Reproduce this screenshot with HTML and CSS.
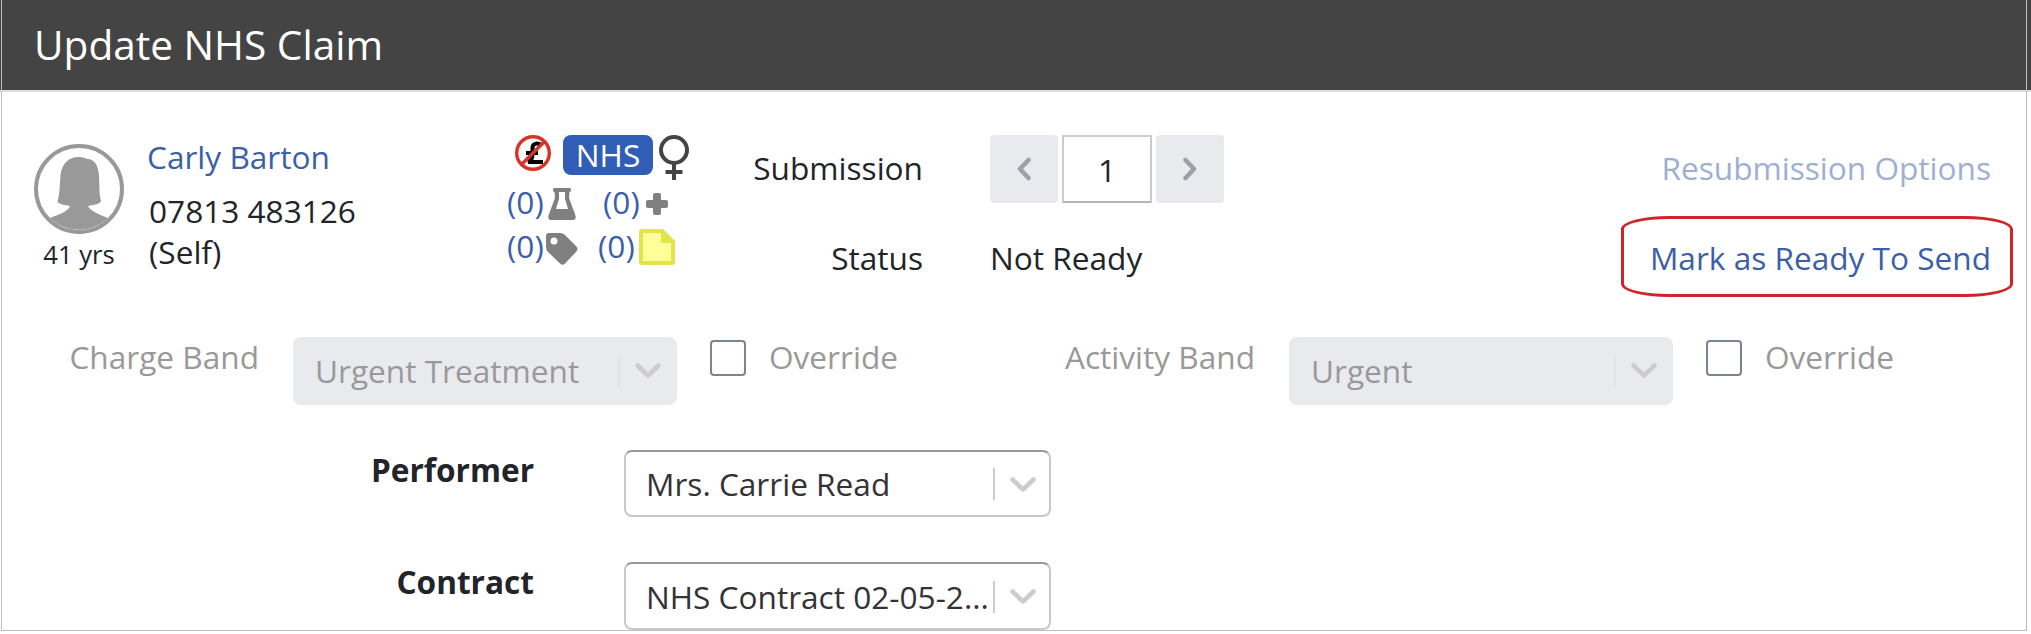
FILE: index.html
```
<!DOCTYPE html>
<html lang="en">
<head>
    <meta charset="UTF-8">
    <meta name="viewport" content="width=device-width, initial-scale=1.0">
    <title>Update NHS Claim</title>
    <link rel="stylesheet" href="styles.css">
</head>
<body>
    <header class="header">
        <h1>Update NHS Claim</h1>
    </header>

    <main class="panel">
        <section class="summary">
            <div class="avatar">
                <svg width="90" height="90" viewBox="0 0 90 90">
                    <circle cx="45" cy="45" r="43" fill="#fff" stroke="#999" stroke-width="4"/>
                    <path fill="#999" d="M45 13C49 13 51 14 53 15C62 15 64 23 65 31L65.500 47Q65.500 52 67 57C66 60 60 61 54 62C55 66 66 71 74 74A41.500 41.500 0 0 1 16 74C24 71 35 67 36 62C30 61 25 60 23.500 58Q25 52 25.500 46L26.500 31C28 20 34 13 45 13Z"/>
                </svg>
                <span class="age">41 yrs</span>
            </div>

            <div class="patient">
                <a class="patient-name">Carly Barton</a>
                <span class="patient-phone">07813 483126</span>
                <span>(Self)</span>
            </div>

            <div class="flags">
                <div class="flag-row flag-top">
                    <svg class="no-charge" width="36" height="36" viewBox="0 0 36 36">
                        <path d="M26 11C24 7.500 17.500 7.500 17.500 13V19C17.500 23 16 26 13 27H28M11 18H23" fill="none" stroke="#000" stroke-width="4"/>
                        <circle cx="18" cy="18" r="16.300" fill="none" stroke="#da3128" stroke-width="3.400"/>
                        <path d="M6.500 29.500L29.500 6.500" stroke="#da3128" stroke-width="3.400"/>
                    </svg>
                    <span class="badge">NHS</span>
                    <svg class="female" width="30" height="46" viewBox="0 0 30 46">
                        <g fill="none" stroke="#444" stroke-width="4">
                            <circle cx="15" cy="15" r="13"/>
                            <path d="M15 28V45M6.500 37H23.500"/>
                        </g>
                    </svg>
                </div>
                <div class="flag-row">
                    <a class="count">(0)<svg class="flask" width="28" height="32" viewBox="0 0 28 32"><path fill="#808080" fill-rule="evenodd" d="M6 0H22Q23 0 23 2T21.500 4L21 10L27 26Q29 32 25 32H3Q-1 32 1 26L7 10L6.500 4Q5 4 5 2T6 0ZM11 4V11L8 21H20L17 11V4Z"/></svg></a>
                    <a class="count">(0)<svg class="plus" width="24" height="24" viewBox="0 0 24 24"><path fill="#808080" d="M10 1H14Q16 1 16 3V8H21Q23 8 23 10V14Q23 16 21 16H16V21Q16 23 14 23H10Q8 23 8 21V16H3Q1 16 1 14V10Q1 8 3 8H8V3Q8 1 10 1Z"/></svg></a>
                </div>
                <div class="flag-row flag-bottom">
                    <a class="count">(0)<svg class="tag" width="32" height="32" viewBox="0 0 32 32"><path fill="#808080" fill-rule="evenodd" d="M3 0H14Q17 0 19 2L30 13Q33 16 30 19L19 30.500Q16.500 33 14 30.500L2 19Q0 17 0 14V3Q0 0 3 0ZM8 4.500A3.500 3.500 0 1 0 8 11.500A3.500 3.500 0 1 0 8 4.500Z"/></svg></a>
                    <a class="count">(0)<svg class="note" width="36" height="36" viewBox="0 0 36 36"><path fill="#e3e34a" d="M3 0H24L36 12V33Q36 36 33 36H3Q0 36 0 33V3Q0 0 3 0Z"/><path fill="#ffff99" d="M4 4H22V14H32V32H4Z"/></svg></a>
                </div>
            </div>

            <div class="submission">
                <span class="label">Submission</span>
                <div class="pager">
                    <button class="pager-btn" aria-label="Previous">
                        <svg width="14" height="24" viewBox="0 0 14 24"><path d="M11.500 3L3 12L11.500 21"/></svg>
                    </button>
                    <div class="pager-value">1</div>
                    <button class="pager-btn" aria-label="Next">
                        <svg width="14" height="24" viewBox="0 0 14 24"><path d="M2.500 3L11 12L2.500 21"/></svg>
                    </button>
                </div>
                <span class="label">Status</span>
                <span>Not Ready</span>
            </div>

            <div class="actions">
                <a class="action disabled">Resubmission Options</a>
                <a class="action highlighted">Mark as Ready To Send</a>
            </div>
        </section>

        <section class="bands">
            <div class="band">
                <span class="band-label">Charge Band</span>
                <div class="select select-disabled">
                    <span class="select-value">Urgent Treatment</span>
                    <span class="separator"></span>
                    <svg class="chevron" width="26" height="16" viewBox="0 0 26 16"><path d="M2.500 2.500L13 12.500L23.500 2.500"/></svg>
                </div>
                <span class="checkbox"></span>
                <span>Override</span>
            </div>
            <div class="band">
                <span class="band-label">Activity Band</span>
                <div class="select select-disabled">
                    <span class="select-value">Urgent</span>
                    <span class="separator"></span>
                    <svg class="chevron" width="26" height="16" viewBox="0 0 26 16"><path d="M2.500 2.500L13 12.500L23.500 2.500"/></svg>
                </div>
                <span class="checkbox"></span>
                <span>Override</span>
            </div>
        </section>

        <section class="fields">
            <div class="field">
                <span class="field-label">Performer</span>
                <div class="select">
                    <span class="select-value">Mrs. Carrie Read</span>
                    <span class="separator"></span>
                    <svg class="chevron" width="26" height="16" viewBox="0 0 26 16"><path d="M2.500 2.500L13 12.500L23.500 2.500"/></svg>
                </div>
            </div>
            <div class="field">
                <span class="field-label">Contract</span>
                <div class="select">
                    <span class="select-value">NHS Contract 02-05-2...</span>
                    <span class="separator"></span>
                    <svg class="chevron" width="26" height="16" viewBox="0 0 26 16"><path d="M2.500 2.500L13 12.500L23.500 2.500"/></svg>
                </div>
            </div>
        </section>
    </main>
</body>
</html>
```

FILE: styles.css
```
*,
*::after {
    margin: 0;
    padding: 0;
    box-sizing: border-box;
}

body {
    font-family: 'Open Sans', sans-serif;
    font-size: 31.6px;
    line-height: 44px;
    color: #212529;
    background: #fff;
    overflow: hidden;
}

svg {
    display: block;
    flex: none;
}

a {
    color: #3c5fa8;
}

.header {
    position: relative;
    height: 92px;
    padding: 18px 0 0 34px;
    background: #444;
    border-bottom: 2px solid #dfdde0;
}

/* panel side lines continue over the header */
.header::after {
    content: '';
    position: absolute;
    top: 0;
    left: 1px;
    width: 2026px;
    height: 92px;
    border: 1px solid #c0c0c0;
    border-width: 0 1px;
}

.header h1 {
    font-size: 40.6px;
    font-weight: 400;
    line-height: 54px;
    color: #fff;
}

.panel {
    width: 2026px;
    height: 539px;
    margin-left: 1px;
    border: 1px solid #c0c0c0;
    border-top: none;
}

/* patient summary */
.summary {
    display: grid;
    grid-template-columns: 90px 337px 217px 530px 1fr;
    column-gap: 23px;
    height: 243px;
    padding: 43px 35px 0 32px;
}

.avatar {
    display: flex;
    flex-direction: column;
    align-items: center;
    padding-top: 9px;
}

.age {
    margin-top: 3px;
    font-size: 25.6px;
    line-height: 36px;
    white-space: nowrap;
}

.patient {
    display: flex;
    flex-direction: column;
    line-height: 41px;
    padding-left: 2px;
}

.patient-name {
    margin: 1px 0 13px -2px;
}

.flag-row {
    display: flex;
    height: 44px;
}

.flag-top {
    align-items: flex-start;
    padding-left: 8px;
}

.badge {
    width: 90px;
    height: 40px;
    margin: 0 6px 0 12px;
    border-radius: 8px;
    line-height: 40px;
    text-align: center;
    color: #fff;
    background: #305db5;
}

.count {
    display: flex;
    width: 96px;
    line-height: 45px;
}

.flask {
    margin: 9px 0 0 4px;
}

.plus {
    margin: 13px 0 0 5px;
}

.flag-bottom .count {
    line-height: 46px;
}

.flag-bottom .count:first-child {
    width: 91px;
}

.tag {
    margin: 10px 0 0 2px;
}

.note {
    margin: 6px 0 0 4px;
}

.submission {
    display: grid;
    grid-template-columns: 176px 1fr;
    grid-template-rows: 68px 44px;
    column-gap: 67px;
    row-gap: 33px;
}

.label {
    text-align: right;
}

.submission > .label:first-child {
    padding-top: 11px;
}

.pager {
    display: flex;
    gap: 4px;
}

.pager-btn {
    display: flex;
    align-items: center;
    justify-content: center;
    width: 68px;
    height: 68px;
    border: none;
    border-radius: 4px;
    background: #e9eaee;
}

.pager-btn path {
    fill: none;
    stroke: #9da0aa;
    stroke-width: 4.5;
    stroke-linecap: round;
    stroke-linejoin: round;
}

.pager-value {
    width: 90px;
    height: 68px;
    border: 2px solid #ccc;
    border-bottom-color: #b5b5b5;
    line-height: 66px;
    text-align: center;
}

.actions {
    display: flex;
    flex-direction: column;
    align-items: flex-end;
    gap: 46px;
    padding-top: 11px;
}

.action {
    position: relative;
    white-space: nowrap;
}

.disabled {
    color: #9eafd4;
}

.highlighted::after {
    content: '';
    position: absolute;
    top: -20px;
    right: -22px;
    width: 392px;
    height: 81px;
    border: 3px solid #d2232a;
    border-radius: 48px / 13px;
}

/* charge and activity bands */
.bands {
    display: flex;
    height: 115px;
    padding-top: 2px;
    color: #999;
}

.band {
    display: flex;
    align-items: flex-start;
    width: 996px;
}

.band > span {
    margin-top: -2px;
}

.band-label {
    width: 257px;
    text-align: right;
}

.select {
    display: flex;
    align-items: center;
    width: 427px;
    height: 67px;
    padding: 1px 13px 0 20px;
    border: 2px solid #c8c8c8;
    border-top-color: #999;
    border-radius: 8px;
    color: #333;
}

.select-value {
    flex: 1;
    white-space: nowrap;
}

.separator {
    width: 2px;
    height: 32px;
    margin-right: 15px;
    background: #ccc;
}

.chevron {
    margin-top: 1px;
}

.chevron path {
    fill: none;
    stroke: #ccc;
    stroke-width: 4.5;
    stroke-linecap: round;
    stroke-linejoin: round;
}

.select-disabled {
    width: 384px;
    height: 68px;
    margin-left: 34px;
    padding: 0 14px 1px 20px;
    border-color: #e9eaee;
    color: #999;
    background: #e9eaee;
}

.select-disabled .separator {
    background: #e2e3e6;
}

.band > .checkbox {
    width: 36px;
    height: 36px;
    margin: 3px 23px 0 33px;
    border: 2px solid #7a8493;
    border-radius: 4px;
}

/* performer and contract */
.fields {
    display: flex;
    flex-direction: column;
    gap: 45px;
}

.field {
    display: flex;
    align-items: flex-start;
    gap: 90px;
}

.field:last-child .select {
    height: 68px;
}

.field-label {
    width: 532px;
    margin-top: -2px;
    font-weight: 700;
    text-align: right;
}
```
